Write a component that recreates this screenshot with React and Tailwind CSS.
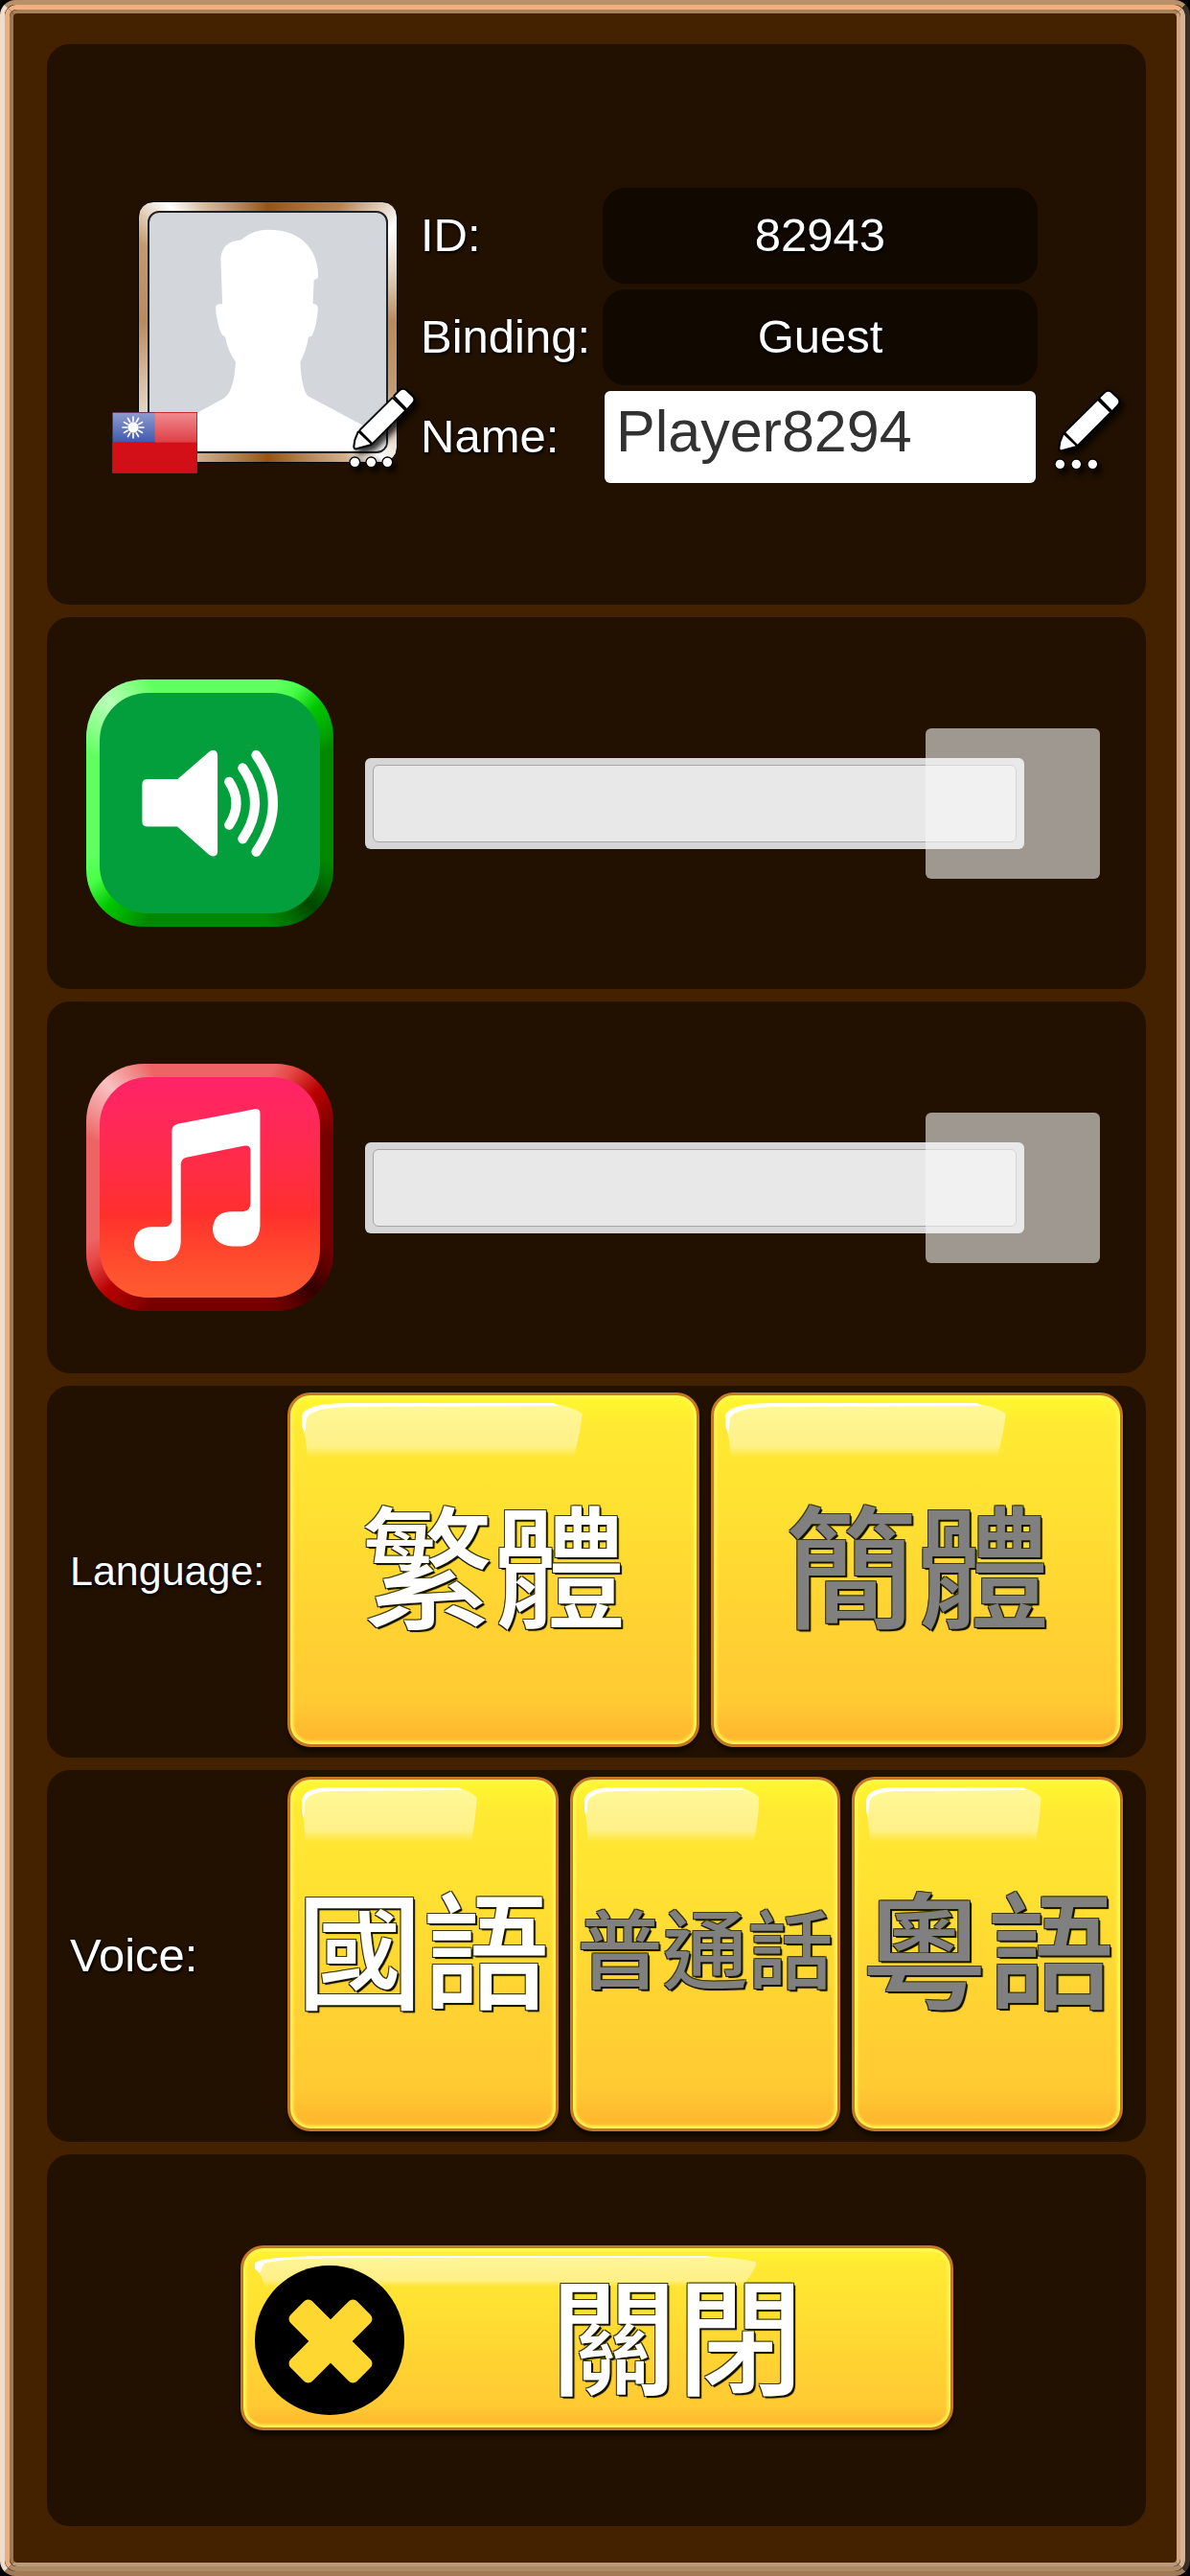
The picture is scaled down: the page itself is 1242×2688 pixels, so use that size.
import React, { useState } from "react";
import clsx from "clsx";

const LANGUAGES = [
  { id: "zh-Hant", label: "繁體" },
  { id: "zh-Hans", label: "簡體" },
];

const VOICES = [
  { id: "guoyu", label: "國語", size: "text-[132px]" },
  { id: "putonghua", label: "普通話", size: "text-[89px]" },
  { id: "yueyu", label: "粵語", size: "text-[132px]" },
];

const textShadow = "[text-shadow:0_0_2px_#000,1px_2px_3px_#000]";
const textOutline =
  "[text-shadow:1px_1px_0_#1a1a00,-1px_-1px_0_#3a3a00,1px_-1px_0_#3a3a00,-1px_1px_0_#1a1a00,2px_2px_1px_#000]";

const Panel = ({ className, children }) => (
  <section className={clsx("rounded-3xl bg-[#221100]", className)}>
    {children}
  </section>
);

const PencilIcon = () => (
  <svg
    viewBox="890 685 240 270"
    className="block h-[90px] w-20 overflow-visible drop-shadow-[4px_5px_3px_rgba(0,0,0,0.8)]"
    aria-hidden="true"
  >
    <g
      fill="#fff"
      stroke="#000"
      strokeWidth="12"
      strokeLinejoin="round"
      paintOrder="stroke"
    >
      <path d="M927 822L964 857L920 869Q914 870 915 864L918 845Z" />
      <path d="M933 815L1033 716L1070 752L970 852Z" />
      <path d="M1041 707L1057 691Q1066 684 1075 691L1094 709Q1102 717 1095 726L1078 745Z" />
    </g>
    <g fill="#fff" stroke="#000" strokeWidth="8" paintOrder="stroke">
      <circle cx="915" cy="914" r="14" />
      <circle cx="966" cy="914" r="14" />
      <circle cx="1017" cy="914" r="14" />
    </g>
  </svg>
);

const Flag = () => (
  <svg viewBox="0 0 267 192" className="block h-16 w-[89px]" aria-hidden="true">
    <defs>
      <linearGradient id="flagRed" x1="0" y1="0" x2="0" y2="1">
        <stop offset="0" stopColor="#dc0f18" />
        <stop offset="1" stopColor="#cf0f16" />
      </linearGradient>
      <linearGradient id="flagShine" x1="0" y1="0" x2="0" y2="1">
        <stop offset="0" stopColor="#fff" stopOpacity="0.52" />
        <stop offset="1" stopColor="#fff" stopOpacity="0.2" />
      </linearGradient>
    </defs>
    <rect width="267" height="192" fill="url(#flagRed)" />
    <rect width="134" height="96" fill="#12309a" />
    <rect x="2" y="2" width="263" height="93" fill="url(#flagShine)" />
    <g stroke="#fff" strokeWidth="5" strokeLinecap="round">
      {Array.from({ length: 12 }).map((_, i) => (
        <path key={i} d="M66 28V15" transform={`rotate(${i * 30} 66 48)`} />
      ))}
    </g>
    <circle cx="66" cy="48" r="17" fill="#fff" />
    <rect x="1" y="1" width="265" height="190" fill="none" stroke="#b01018" strokeOpacity="0.6" strokeWidth="2" />
  </svg>
);

const Silhouette = () => (
  <svg viewBox="165 97 747 748" className="block size-full" aria-hidden="true">
    <path
      fill="#fff"
      d="M165 845V800Q240 765 330 718L395 683Q432 665 437 565Q412 530 404 485Q392 487 383 450Q374 415 374 390Q380 380 395 382L390 240Q392 185 455 180Q490 148 540 148Q640 148 680 220Q700 260 697 300L684 308L681 382Q694 382 697 395Q694 450 678 483L667 487Q660 530 641 565Q645 650 664 672L828 760L912 800V845Z"
    />
  </svg>
);

const SpeakerIcon = () => (
  <svg viewBox="106 106 684 684" className="block size-full" aria-hidden="true">
    <path
      fill="#fff"
      d="M255 374H348L445 290Q455 281 464 285Q472 289 472 300V598Q472 609 463 612Q454 615 445 608L347 521H255Q238 521 238 505V390Q238 374 255 374Z"
    />
    <g fill="none" stroke="#fff" strokeWidth="30" strokeLinecap="round">
      <path d="M508 382Q552 448 508 516" />
      <path d="M550 339Q626 448 550 559" />
      <path d="M592 299Q696 448 592 599" />
    </g>
  </svg>
);

const MusicIcon = () => (
  <svg viewBox="106 106 684 684" className="block size-full" aria-hidden="true">
    <path
      fill="#fff"
      d="M330 275Q330 256 348 251L588 205Q604 203 604 218V568Q600 631 540 631H518Q458 625 457 577Q460 524 515 523H548Q574 521 574 500V330Q572 316 556 319L375 355Q358 360 358 378V618Q354 676 295 677H268Q214 670 213 623Q216 572 268 571H305Q330 570 330 548Z"
    />
  </svg>
);

const CloseIcon = () => (
  <svg viewBox="0 0 156 156" className="block size-[156px] shrink-0" aria-hidden="true">
    <circle cx="78" cy="78" r="78" />
    <g fill="#ffd731">
      <rect x="30" y="63" width="98" height="32" rx="6" transform="rotate(45 79 79)" />
      <rect x="30" y="63" width="98" height="32" rx="6" transform="rotate(-45 79 79)" />
    </g>
  </svg>
);

// Glossy highlight in the upper left corner of the gold buttons
const Gloss = ({ className }) => (
  <svg
    viewBox="0 0 292 57"
    preserveAspectRatio="none"
    className={clsx("absolute left-3 top-2 block", className)}
    aria-hidden="true"
  >
    <defs>
      <linearGradient id="gloss" x1="0" y1="0" x2="0" y2="1">
        <stop offset="0" stopColor="#fff" stopOpacity="0.5" />
        <stop offset="0.78" stopColor="#fff" stopOpacity="0.42" />
        <stop offset="1" stopColor="#fff" stopOpacity="0" />
      </linearGradient>
    </defs>
    <path d="M1 14Q4 2 40 2L264 1Q282 4 292 11Q291 28 283 57H6Q4 36 1 24Z" fill="url(#gloss)" />
    <path d="M0 14Q2 0 50 0H262L268 3L50 4Q8 5 5 16L3 32L0 24Z" fill="#fff" />
  </svg>
);

const GoldButton = ({ className, gloss, children, ...props }) => (
  <button
    type="button"
    className={clsx(
      "relative rounded-3xl border-3 border-[#c47a22] bg-[linear-gradient(to_bottom,#fff82e_0%,#ffe932_9%,#ffe232_30%,#ffd232_65%,#ffca33_88%,#ffb92e_97%)] font-medium leading-none shadow-[inset_0_0_3px_3px_#fff654,0_5px_4px_rgba(0,0,0,0.5)] [font-family:'Noto_Sans_CJK_TC',sans-serif]",
      textOutline,
      className
    )}
    {...props}
  >
    <Gloss className={gloss} />
    {children}
  </button>
);

const VolumeRow = ({ id, name, bevel, face, icon, value, onChange }) => (
  <Panel className="flex h-[388px] items-center gap-[33px] pl-[41px] pr-12">
    <button
      type="button"
      aria-label={`Mute ${name}`}
      onClick={() => onChange(0)}
      className={clsx("size-[258px] shrink-0 rounded-[60px] p-3.5", bevel)}
    >
      <span className={clsx("block size-full rounded-[50px]", face)}>{icon}</span>
    </button>
    <div className="relative flex h-[157px] flex-1 items-center">
      <div className="mr-[79px] h-[95px] flex-1 rounded-md bg-[#d6d6d6] px-2 py-[7px]">
        <div className="h-full rounded-md border border-[#a6a6a6] bg-[#e8e8e8]" />
      </div>
      <input
        id={id}
        type="range"
        min="0"
        max="100"
        aria-label={name}
        value={value}
        onChange={(e) => onChange(Number(e.target.value))}
        className="absolute inset-0 size-full cursor-pointer appearance-none bg-transparent [&::-webkit-slider-thumb]:h-[157px] [&::-webkit-slider-thumb]:w-[182px] [&::-webkit-slider-thumb]:appearance-none [&::-webkit-slider-thumb]:rounded-md [&::-webkit-slider-thumb]:bg-[#f6f6f6]/59"
      />
    </div>
  </Panel>
);

const App = () => {
  const [name, setName] = useState("Player8294");
  const [sound, setSound] = useState(100);
  const [music, setMusic] = useState(100);
  const [language, setLanguage] = useState("zh-Hant");
  const [voice, setVoice] = useState("guoyu");

  return (
    <div className="min-h-screen bg-black text-white [font-family:'Liberation_Sans',Arial,sans-serif]">
      {/* Bevelled frame */}
      <div className="rounded-2xl border-5 border-b-[#a07a55] border-l-[#f0dccb] border-r-[#3a3028] border-t-[#b8906a]">
        <div className="rounded-xl border-5 border-b-[#ad8966] border-l-[#e8b080] border-r-[#d9b393] border-t-[#f0b080]">
          <main className="flex flex-col gap-[13px] rounded-lg border-4 border-b-[#b99a7c] border-l-[#a07850] border-r-[#d0a582] border-t-[#a9825a] bg-[#442200] pb-[38px] pl-[35px] pr-8 pt-8">
            {/* Profile */}
            <Panel className="flex h-[585px] items-start gap-6 pl-[95px] pr-[18px] pt-[150px]">
              <div className="relative mt-3.5 h-[273px] w-[271px] shrink-0 rounded-2xl border border-black bg-[conic-gradient(#965414_0deg,#b98450_30deg,#d8c0a8_40deg,#ffffff_50deg,#e0cdb8_66deg,#b98a5c_85deg,#c49a72_115deg,#e8d8c8_130deg,#ffffff_138deg,#d0b090_148deg,#965414_180deg,#d8c0a8_215deg,#e8d8c8_235deg,#b98a5c_275deg,#c49a70_305deg,#ffffff_322deg,#d8c0a8_332deg,#965414_360deg)] p-[9px]">
                <div className="size-full overflow-hidden rounded-xl border-2 border-[#222] bg-[#d3d6db]">
                  <Silhouette />
                </div>
                <div className="absolute -bottom-3 -left-7">
                  <Flag />
                </div>
                <button
                  type="button"
                  aria-label="Change picture"
                  className="absolute -bottom-3.5 -right-7"
                >
                  <PencilIcon />
                </button>
              </div>

              <div
                className={clsx(
                  "grid flex-1 grid-cols-[190px_1fr_95px] gap-y-1.5 text-[49px]",
                  textShadow
                )}
              >
                <span className="self-center">ID:</span>
                <output className="flex h-[100px] items-center justify-center rounded-3xl bg-[#110800]">
                  82943
                </output>
                <span />

                <span className="self-center">Binding:</span>
                <output className="flex h-[100px] items-center justify-center rounded-3xl bg-[#110800]">
                  Guest
                </output>
                <span />

                <label htmlFor="name" className="self-center">
                  Name:
                </label>
                <input
                  id="name"
                  type="text"
                  value={name}
                  onChange={(e) => setName(e.target.value)}
                  className="mx-0.5 h-24 min-w-0 rounded-md bg-white pb-3 pl-3 text-[61px] text-[#323232] [text-shadow:none]"
                />
                <button
                  type="button"
                  aria-label="Edit name"
                  className="self-start justify-self-end"
                >
                  <PencilIcon />
                </button>
              </div>
            </Panel>

            {/* Volume */}
            <VolumeRow
              id="sound"
              name="Sound"
              value={sound}
              onChange={setSound}
              icon={<SpeakerIcon />}
              face="bg-[#039f3c]"
              bevel="bg-[conic-gradient(#5fff5f_0deg,#5fff5f_30deg,#48ff48_37deg,#00c400_48deg,#00a000_60deg,#008800_66deg,#008800_116deg,#007000_124deg,#004600_135deg,#007400_146deg,#008800_154deg,#008800_208deg,#00c800_225deg,#48ff48_236deg,#5fff5f_246deg,#5fff5f_292deg,#b8ffb8_315deg,#5fff5f_334deg)]"
            />
            <VolumeRow
              id="music"
              name="Music"
              value={music}
              onChange={setMusic}
              icon={<MusicIcon />}
              face="bg-linear-to-b from-[#ff2368] via-[#ff2f2c] via-62% to-[#ff5c30]"
              bevel="bg-[conic-gradient(#ec6464_0deg,#ec6464_28deg,#e84848_35deg,#b80000_48deg,#900000_58deg,#760000_66deg,#760000_116deg,#600000_124deg,#340000_135deg,#640000_146deg,#760000_154deg,#760000_206deg,#b80000_225deg,#e84848_238deg,#ec6464_246deg,#ec6464_292deg,#f9c0c0_315deg,#ec6464_334deg)]"
            />

            {/* Language */}
            <Panel className="flex h-[388px] items-start pl-6 pr-6 pt-[7px]">
              <h2
                id="language"
                className={clsx("w-[227px] shrink-0 self-center pb-2 text-[43px]", textShadow)}
              >
                Language:
              </h2>
              <div role="group" aria-labelledby="language" className="flex flex-1 gap-3">
                {LANGUAGES.map((item) => (
                  <GoldButton
                    key={item.id}
                    aria-pressed={language === item.id}
                    onClick={() => setLanguage(item.id)}
                    gloss="h-[57px] w-[69%]"
                    className={clsx(
                      "h-[370px] flex-1 pb-5 text-[138px]",
                      language === item.id ? "text-white" : "text-[#808080]"
                    )}
                  >
                    {item.label}
                  </GoldButton>
                ))}
              </div>
            </Panel>

            {/* Voice */}
            <Panel className="flex h-[388px] items-start pl-6 pr-6 pt-[7px]">
              <h2
                id="voice"
                className={clsx("w-[227px] shrink-0 self-center pb-2 text-[49px]", textShadow)}
              >
                Voice:
              </h2>
              <div role="group" aria-labelledby="voice" className="flex flex-1 gap-3">
                {VOICES.map((item) => (
                  <GoldButton
                    key={item.id}
                    aria-pressed={voice === item.id}
                    onClick={() => setVoice(item.id)}
                    gloss="h-[57px] w-[66%]"
                    className={clsx(
                      "h-[370px] flex-1 whitespace-nowrap pb-5",
                      item.size,
                      voice === item.id ? "text-white" : "text-[#808080]"
                    )}
                  >
                    {item.label}
                  </GoldButton>
                ))}
              </div>
            </Panel>

            {/* Close */}
            <Panel className="flex h-[388px] items-center justify-center pb-1.5">
              <GoldButton
                gloss="h-8 w-[71%]"
                className="flex h-[193px] w-[744px] items-center pl-3 pt-1.5 text-[132px]"
              >
                <span className="relative">
                  <CloseIcon />
                </span>
                <span className="relative flex-1 pb-5 text-center">關閉</span>
              </GoldButton>
            </Panel>
          </main>
        </div>
      </div>
    </div>
  );
};

export default App;
